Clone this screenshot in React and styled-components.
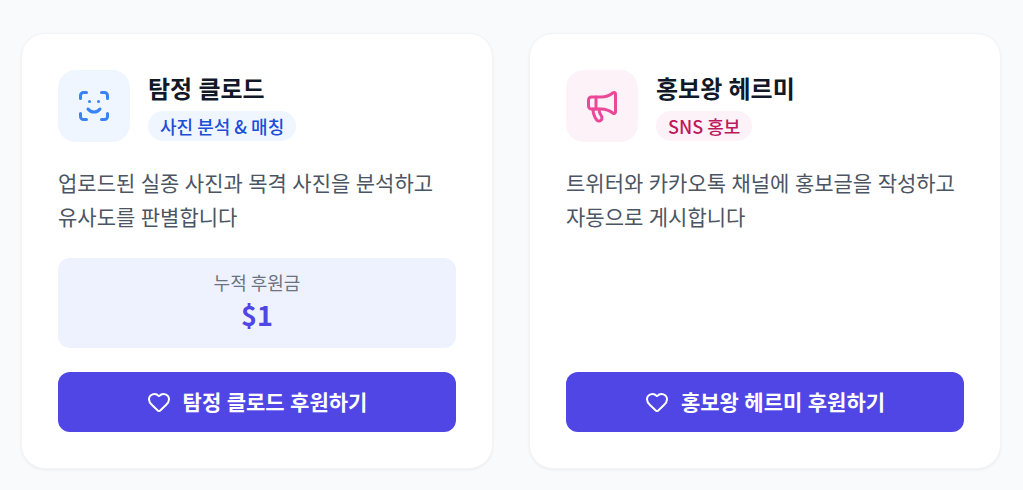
import React from "react";
import styled, { createGlobalStyle } from "styled-components";
import { Heart, Megaphone, ScanFace } from "lucide-react";

const agents = [
  {
    name: "탐정 클로드",
    role: "사진 분석 & 매칭",
    description: "업로드된 실종 사진과 목격 사진을 분석하고 유사도를 판별합니다",
    icon: ScanFace,
    tone: { icon: "#3b82f6", text: "#1d4ed8", bg: "#eff6ff" },
    total: 1,
  },
  {
    name: "홍보왕 헤르미",
    role: "SNS 홍보",
    description: "트위터와 카카오톡 채널에 홍보글을 작성하고 자동으로 게시합니다",
    icon: Megaphone,
    tone: { icon: "#ec4899", text: "#be185d", bg: "#fdf2f8" },
  },
];

const koreanFont = `"Noto Sans CJK KR", sans-serif`;

const AgentCard = ({ name, role, description, icon: Icon, tone, total }) => (
  <Card>
    <Header>
      <IconTile $tone={tone}>
        <Icon size={36} aria-hidden="true" />
      </IconTile>
      <div>
        <Name>{name}</Name>
        <Role $tone={tone}>{role}</Role>
      </div>
    </Header>
    <Description>{description}</Description>
    {total !== undefined && (
      <TotalBox>
        <TotalLabel>누적 후원금</TotalLabel>
        <TotalAmount>${total}</TotalAmount>
      </TotalBox>
    )}
    <SponsorButton type="button">
      <Heart size={24} aria-hidden="true" />
      {name} 후원하기
    </SponsorButton>
  </Card>
);

const App = () => (
  <>
    <GlobalStyle />
    <Grid>
      {agents.map((agent) => (
        <AgentCard key={agent.name} {...agent} />
      ))}
    </Grid>
  </>
);

export default App;

const GlobalStyle = createGlobalStyle`
  *, *::before, *::after {
    box-sizing: border-box;
  }
  body {
    margin: 0;
    background: #f9fafb;
    font-family: "Noto Sans", ${koreanFont};
  }
  h2, p {
    margin: 0;
  }
`;

const Grid = styled.main`
  display: grid;
  grid-template-columns: repeat(2, minmax(0, 1fr));
  gap: 36px;
  padding: 33px 22px 21px 21px;
`;

const Card = styled.article`
  display: flex;
  flex-direction: column;
  padding: 36px;
  border: 1px solid #f3f4f6;
  border-radius: 24px;
  background: white;
  box-shadow: 0 1px 3px rgba(0, 0, 0, 0.06);
`;

const Header = styled.header`
  display: flex;
  align-items: center;
  gap: 18px;
  margin-bottom: 24px;
`;

const IconTile = styled.div`
  display: flex;
  align-items: center;
  justify-content: center;
  width: 72px;
  height: 72px;
  border-radius: 18px;
  color: ${({ $tone }) => $tone.icon};
  background: ${({ $tone }) => $tone.bg};
`;

const Name = styled.h2`
  margin-bottom: 4px;
  color: #111827;
  font-size: 24px;
  font-weight: 700;
  line-height: 36px;
`;

const Role = styled.span`
  display: block;
  width: fit-content;
  padding: 3px 12px;
  border-radius: 15px;
  color: ${({ $tone }) => $tone.text};
  background: ${({ $tone }) => $tone.bg};
  font-family: ${koreanFont};
  font-size: 18px;
  font-weight: 500;
  line-height: 24px;
`;

const Description = styled.p`
  margin-bottom: 24px;
  color: #4b5563;
  font-size: 21px;
  line-height: 34px;
`;

const TotalBox = styled.div`
  margin-bottom: 24px;
  padding: 12px;
  border-radius: 12px;
  background: #eef2ff;
  font-family: ${koreanFont};
  text-align: center;
`;

const TotalLabel = styled.p`
  color: #6b7280;
  font-size: 18px;
  line-height: 24px;
`;

const TotalAmount = styled.p`
  color: #4f46e5;
  font-size: 27px;
  font-weight: 700;
  line-height: 42px;
`;

const SponsorButton = styled.button`
  display: flex;
  align-items: center;
  justify-content: center;
  gap: 12px;
  margin-top: auto;
  padding: 15px;
  border: 0;
  border-radius: 12px;
  color: white;
  background: #4f46e5;
  font-family: inherit;
  font-size: 21px;
  font-weight: 600;
  line-height: 30px;
  cursor: pointer;
`;
